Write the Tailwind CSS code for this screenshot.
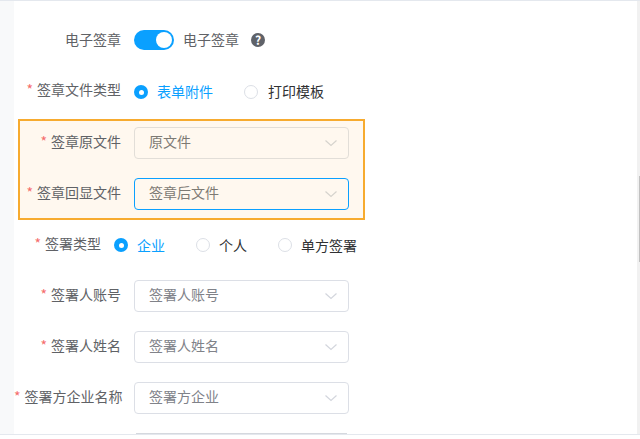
<!DOCTYPE html>
<html lang="en">
<head>
    <meta charset="UTF-8">
    <title>电子签章</title>
    <script src="https://cdn.jsdelivr.net/npm/@tailwindcss/browser@4"></script>
</head>
<body class="bg-white overflow-hidden font-['Noto_Sans_CJK_SC','Noto_Sans',sans-serif]">
<div class="w-[640px] h-[439px] overflow-hidden">
    <div class="flex h-[435px] border-t border-b border-[#e4e8ee]">
        <div class="w-[14px] shrink-0 bg-[#f8f9fa]"></div>

        <div class="flex-1 overflow-hidden pt-[28px] text-[14px] text-[#606266]">
            <!-- switch row -->
            <div class="flex items-center h-[22px]">
                <label class="w-[107px] shrink-0 text-right whitespace-nowrap pb-[2px]">电子签章</label>
                <div class="ml-[13px] w-[40px] h-[20px] rounded-full bg-[#0aa0ff] relative">
                    <span class="absolute right-[2px] top-[2px] w-[16px] h-[16px] rounded-full bg-white"></span>
                </div>
                <span class="ml-[9px] mr-[1px] pb-[2px]">电子签章</span>
                <span class="ml-[11px] w-[14px] h-[14px] rounded-full bg-[#5f6269] text-white text-[12px] font-bold flex items-center justify-center">?</span>
            </div>

            <!-- file type -->
            <div class="flex items-center h-[22px] mt-[30px]">
                <label class="w-[107px] shrink-0 text-right whitespace-nowrap pb-[6px]"><span class="text-[#f56c6c] mr-[4px]">*</span>签章文件类型</label>
                <span class="ml-[13px] w-[14px] h-[14px] rounded-full bg-[#0aa0ff] flex items-center justify-center"><span class="w-[5px] h-[5px] rounded-full bg-white"></span></span>
                <span class="ml-[9px] text-[#0aa0ff] pb-[2px]">表单附件</span>
                <span class="ml-[31px] w-[14px] h-[14px] rounded-full border border-[#dcdfe6] bg-white"></span>
                <span class="ml-[10px] text-[#303133] pb-[2px]">打印模板</span>
            </div>

            <!-- highlighted block -->
            <div class="ml-[4px] mt-[16px] w-[347px] h-[101px] border-2 border-[#f7ab2f] bg-[#fff8ef] pt-[6px]">
                <div class="flex items-center h-[32px]">
                    <label class="w-[101px] shrink-0 text-right whitespace-nowrap pb-[4px]"><span class="text-[#f56c6c] mr-[4px]">*</span>签章原文件</label>
                    <div class="ml-[13px] w-[215px] h-[32px] shrink-0 flex items-center justify-between border border-[#e2ded8] rounded-[4px] pl-[14px] pr-[10px] text-[#7d7a74]">
                        <span class="pb-[3px]">原文件</span>
                        <svg class="w-[14px] h-[14px]" viewBox="0 0 14 14" fill="none" stroke="#d6d3cd" stroke-width="1.2"><path d="M1.5 4.5 7 9.5 12.5 4.5"/></svg>
                    </div>
                </div>
                <div class="flex items-center h-[32px] mt-[19px]">
                    <label class="w-[101px] shrink-0 text-right whitespace-nowrap pb-[4px]"><span class="text-[#f56c6c] mr-[4px]">*</span>签章回显文件</label>
                    <div class="ml-[13px] w-[215px] h-[32px] shrink-0 flex items-center justify-between border border-[#0aa0ff] rounded-[4px] pl-[14px] pr-[10px] text-[#7d7a74]">
                        <span class="pb-[3px]">签章后文件</span>
                        <svg class="w-[14px] h-[14px]" viewBox="0 0 14 14" fill="none" stroke="#d6d3cd" stroke-width="1.2"><path d="M1.5 4.5 7 9.5 12.5 4.5"/></svg>
                    </div>
                </div>
            </div>

            <!-- sign type -->
            <div class="flex items-center h-[22px] mt-[14px]">
                <label class="w-[87px] shrink-0 text-right whitespace-nowrap pb-[3px]"><span class="text-[#f56c6c] mr-[4px]">*</span>签署类型</label>
                <span class="ml-[13px] w-[14px] h-[14px] rounded-full bg-[#0aa0ff] flex items-center justify-center"><span class="w-[5px] h-[5px] rounded-full bg-white"></span></span>
                <span class="ml-[9px] mr-[1px] text-[#0aa0ff]">企业</span>
                <span class="ml-[30px] w-[14px] h-[14px] rounded-full border border-[#dcdfe6] bg-white"></span>
                <span class="ml-[9px] mr-[1px] text-[#303133]">个人</span>
                <span class="ml-[30px] w-[14px] h-[14px] rounded-full border border-[#dcdfe6] bg-white"></span>
                <span class="ml-[9px] text-[#303133]">单方签署</span>
            </div>

            <!-- selects -->
            <div class="flex items-center h-[32px] mt-[24px]">
                <label class="w-[107px] shrink-0 text-right whitespace-nowrap pb-[4px]"><span class="text-[#f56c6c] mr-[4px]">*</span>签署人账号</label>
                <div class="ml-[13px] w-[215px] h-[32px] flex items-center justify-between border border-[#dcdfe6] rounded-[4px] pl-[14px] pr-[10px] text-[#808289]">
                    <span class="pb-[3px]">签署人账号</span>
                    <svg class="w-[14px] h-[14px]" viewBox="0 0 14 14" fill="none" stroke="#d3d6dd" stroke-width="1.2"><path d="M1.5 4.5 7 9.5 12.5 4.5"/></svg>
                </div>
            </div>
            <div class="flex items-center h-[32px] mt-[19px]">
                <label class="w-[107px] shrink-0 text-right whitespace-nowrap pb-[4px]"><span class="text-[#f56c6c] mr-[4px]">*</span>签署人姓名</label>
                <div class="ml-[13px] w-[215px] h-[32px] flex items-center justify-between border border-[#dcdfe6] rounded-[4px] pl-[14px] pr-[10px] text-[#808289]">
                    <span class="pb-[3px]">签署人姓名</span>
                    <svg class="w-[14px] h-[14px]" viewBox="0 0 14 14" fill="none" stroke="#d3d6dd" stroke-width="1.2"><path d="M1.5 4.5 7 9.5 12.5 4.5"/></svg>
                </div>
            </div>
            <div class="flex items-center h-[32px] mt-[19px]">
                <label class="w-[107px] shrink-0 text-right whitespace-nowrap pb-[4px]"><span class="text-[#f56c6c] mr-[4px]">*</span>签署方企业名称</label>
                <div class="ml-[13px] w-[215px] h-[32px] flex items-center justify-between border border-[#dcdfe6] rounded-[4px] pl-[14px] pr-[10px] text-[#808289]">
                    <span class="pb-[3px]">签署方企业</span>
                    <svg class="w-[14px] h-[14px]" viewBox="0 0 14 14" fill="none" stroke="#d3d6dd" stroke-width="1.2"><path d="M1.5 4.5 7 9.5 12.5 4.5"/></svg>
                </div>
            </div>
            <!-- next row, cut off at the bottom -->
            <div class="ml-[122px] mt-[19px] w-[211px] h-[32px] border-t border-[#d5d8de]"></div>
        </div>

        <div class="w-[3px] shrink-0 bg-[#f1f1f1] relative">
            <div class="absolute right-0 top-[175px] w-[1px] h-[86px] bg-[#c1c1c1]"></div>
        </div>
    </div>
</div>
</body>
</html>
